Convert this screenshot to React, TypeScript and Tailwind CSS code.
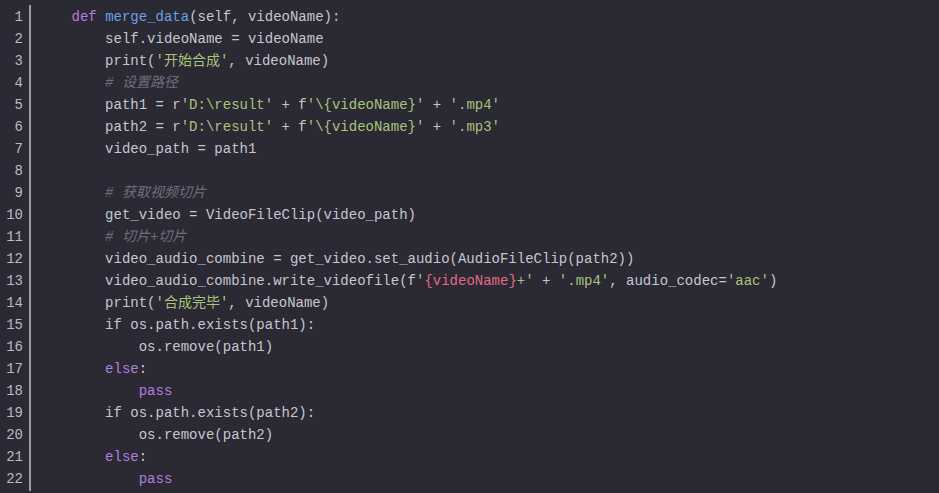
import React from "react";

type Tok = [string, string?];

const K = "text-[#b07fdc]"; // keyword
const F = "text-[#6d9fe6]"; // function name
const S = "text-[#a9c47a]"; // string
const C = "text-[#6c6f7d] italic"; // comment
const R = "text-[#e06a86]"; // interpolation

const lines: Tok[][] = [
  [["def", K], [" "], ["merge_data", F], ["(self, videoName):"]],
  [["    self.videoName = videoName"]],
  [["    print("], ["'开始合成'", S], [", videoName)"]],
  [["    # 设置路径", C]],
  [["    path1 = r"], ["'D:\\result'", S], [" + f"], ["'\\{videoName}'", S], [" + "], ["'.mp4'", S]],
  [["    path2 = r"], ["'D:\\result'", S], [" + f"], ["'\\{videoName}'", S], [" + "], ["'.mp3'", S]],
  [["    video_path = path1"]],
  [[""]],
  [["    # 获取视频切片", C]],
  [["    get_video = VideoFileClip(video_path)"]],
  [["    # 切片+切片", C]],
  [["    video_audio_combine = get_video.set_audio(AudioFileClip(path2))"]],
  [
    ["    video_audio_combine.write_videofile(f"],
    ["'", S],
    ["{videoName}", R],
    ["+'", S],
    [" + "],
    ["'.mp4'", S],
    [", audio_codec="],
    ["'aac'", S],
    [")"],
  ],
  [["    print("], ["'合成完毕'", S], [", videoName)"]],
  [["    if os.path.exists(path1):"]],
  [["        os.remove(path1)"]],
  [["    "], ["else", K], [":"]],
  [["        "], ["pass", K]],
  [["    if os.path.exists(path2):"]],
  [["        os.remove(path2)"]],
  [["    "], ["else", K], [":"]],
  [["        "], ["pass", K]],
];

const App = () => {
  return (
    <div
      className="w-[939px] h-[493px] bg-[#2a2934] overflow-hidden flex pt-[6px] text-[14px] leading-[22px] text-[#c5c7cf]"
      style={{ fontFamily: '"Liberation Mono", "Noto Sans CJK SC", monospace' }}
    >
      <div className="w-[23px] flex flex-col items-end text-[#b9bac2] shrink-0">
        {lines.map((_, i) => (
          <div key={i}>{i + 1}</div>
        ))}
      </div>
      <div className="ml-[6px] w-[1.5px] bg-[#9b9ba3] h-[486px] -mt-[1px] shrink-0" />
      <div className="ml-[41px] flex flex-col whitespace-pre">
        {lines.map((toks, i) => (
          <div key={i} className="h-[22px]">
            {toks.map(([t, cls], j) => (
              <span key={j} className={cls}>
                {t}
              </span>
            ))}
          </div>
        ))}
      </div>
    </div>
  );
};

export default App;
